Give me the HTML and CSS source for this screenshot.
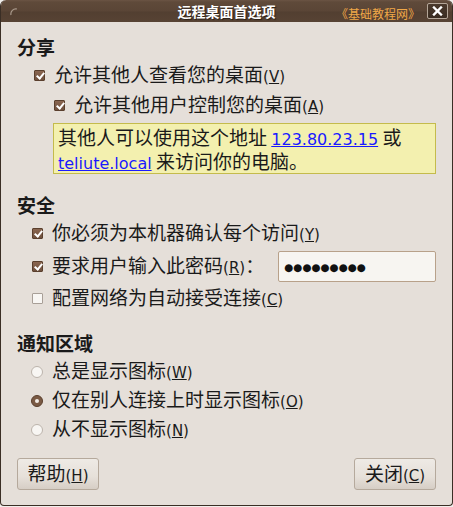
FILE: index.html
```html
<!DOCTYPE html>
<html lang="zh-CN">
<head>
<meta charset="utf-8">
<title>远程桌面首选项</title>
<link rel="stylesheet" href="styles.css">
</head>
<body>
<div class="window">
  <div class="titlebar">
    <div class="tb-left">
      <svg class="spinner" width="8" height="8" viewBox="0 0 8 8"><path d="M1 7 A5 5 0 0 1 7 1" fill="none" stroke="#a8988a" stroke-width="1.2"/></svg>
    </div>
    <div class="title">远程桌面首选项</div>
    <div class="tb-right">
      <span class="watermark">《基础教程网》</span>
      <span class="close"><svg width="11" height="10" viewBox="0 0 11 10"><path d="M2 1.5 L9 8.5 M9 1.5 L2 8.5" stroke="#fff" stroke-width="2.4" stroke-linecap="square"/></svg></span>
    </div>
  </div>

  <div class="content">
    <div class="heading h-share">分享</div>
    <div class="row row-share1">
      <span class="cb checked"></span>
      <span class="label">允许其他人查看您的桌面<span class="l">(<u>V</u>)</span></span>
    </div>
    <div class="row row-share2">
      <span class="cb checked"></span>
      <span class="label">允许其他用户控制您的桌面<span class="l">(<u>A</u>)</span></span>
    </div>
    <div class="note">
      <div class="note-line">其他人可以使用这个地址 <a class="l link" href="#">123.80.23.15</a> 或</div>
      <div class="note-line"><a class="l link" href="#">teliute.local</a> 来访问你的电脑。</div>
    </div>

    <div class="heading h-sec">安全</div>
    <div class="row row-sec1">
      <span class="cb checked"></span>
      <span class="label">你必须为本机器确认每个访问<span class="l">(<u>Y</u>)</span></span>
    </div>
    <div class="row row-sec2">
      <span class="cb checked"></span>
      <span class="label">要求用户输入此密码<span class="l">(<u>R</u>)</span>：</span>
      <span class="entry"><span class="dots">●●●●●●●●●</span></span>
    </div>
    <div class="row row-sec3">
      <span class="cb"></span>
      <span class="label">配置网络为自动接受连接<span class="l">(<u>C</u>)</span></span>
    </div>

    <div class="heading h-notif">通知区域</div>
    <div class="row row-radio">
      <span class="radio"></span>
      <span class="label">总是显示图标<span class="l">(<u>W</u>)</span></span>
    </div>
    <div class="row row-radio">
      <span class="radio checked"></span>
      <span class="label">仅在别人连接上时显示图标<span class="l">(<u>O</u>)</span></span>
    </div>
    <div class="row row-radio">
      <span class="radio"></span>
      <span class="label">从不显示图标<span class="l">(<u>N</u>)</span></span>
    </div>

    <div class="footer">
      <button class="btn">帮助<span class="l">(<u>H</u>)</span></button>
      <button class="btn">关闭<span class="l">(<u>C</u>)</span></button>
    </div>
  </div>
</div>
</body>
</html>
```
FILE: styles.css
```css
html, body {
  margin: 0;
  padding: 0;
  background: #f2efec;
}
body {
  width: 453px;
  height: 507px;
  overflow: hidden;
  font-family: "Noto Sans CJK SC", "DejaVu Sans", sans-serif;
  font-size: 19px;
  color: #1a1a1a;
}
.window {
  width: 453px;
  height: 506px;
  box-sizing: border-box;
  background: #e5dfd9;
  border: 1px solid #3a2e25;
  border-top: none;
  border-radius: 6px 6px 4px 4px;
  display: flex;
  flex-direction: column;
  overflow: hidden;
}
.titlebar {
  height: 22px;
  flex: none;
  margin: 0 -1px;
  background: linear-gradient(#6b5444 0px, #5f4a3a 2px, #5a4536 11px, #523f31 12px, #574334 22px);
  border-radius: 6px 6px 0 0;
  display: grid;
  grid-template-columns: 1fr auto 1fr;
  align-items: center;
}
.tb-left {
  padding-left: 10px;
  display: flex;
  align-items: center;
}
.spinner { margin-top: 1px; }
.title {
  font-size: 14px;
  font-weight: bold;
  color: #ffffff;
  line-height: 22px;
  text-shadow: 1px 1px 1px #2a1f17;
}
.tb-right {
  display: flex;
  justify-content: flex-end;
  align-items: center;
  gap: 7px;
  padding-right: 5px;
}
.watermark {
  font-size: 12px;
  color: #f0a848;
  line-height: 16px;
  margin-top: 6px;
}
.close {
  width: 19px;
  height: 14px;
  border: 1px solid #b4a698;
  border-radius: 2px;
  background: linear-gradient(#4a392c, #3a2c21);
  display: flex;
  align-items: center;
  justify-content: center;
}
.content {
  flex: 1;
  display: flex;
  flex-direction: column;
  padding: 0 16px 15px 16px;
}
.l {
  font-family: "DejaVu Sans", sans-serif;
  font-size: 15px;
}
.heading {
  font-weight: bold;
  font-size: 19px;
  line-height: 24px;
}
.h-share { margin-top: 13px; }
.h-sec { margin-top: 19px; }
.h-notif { margin-top: 19px; }
.row {
  display: flex;
  align-items: center;
  line-height: 24px;
}
.row-share1 { height: 30px; margin-top: 1px; padding-left: 17px; gap: 9px; }
.row-share2 { height: 30px; padding-left: 37px; gap: 9px; }
.row-sec1 { height: 32px; padding-left: 15px; gap: 9px; }
.row-sec2 { height: 35px; padding-left: 15px; gap: 9px; }
.row-sec3 { height: 28px; padding-left: 15px; gap: 9px; }
.row-radio { height: 29px; padding-left: 14px; gap: 9px; }
.h-notif + .row-radio { margin-top: 2px; }

.cb {
  width: 11px;
  height: 11px;
  box-sizing: border-box;
  border: 1px solid #a89f97;
  border-radius: 1px;
  background: #f8f6f3;
  flex: none;
  position: relative;
}
.cb.checked {
  border-color: #5a3f2d;
  background: linear-gradient(#8a6650, #6f513e);
}
.cb.checked::after {
  content: "";
  position: absolute;
  left: 3px;
  top: 0px;
  width: 3px;
  height: 6px;
  border: solid #fff;
  border-width: 0 2px 2px 0;
  transform: rotate(40deg);
}
.radio {
  width: 12px;
  height: 12px;
  box-sizing: border-box;
  border-radius: 50%;
  border: 1px solid #bcb4ac;
  background: #f8f6f3;
  flex: none;
  position: relative;
}
.radio.checked {
  border-color: #5a3f2d;
  background: #7a5a44;
}
.radio.checked::after {
  content: "";
  position: absolute;
  left: 3px;
  top: 3px;
  width: 4px;
  height: 4px;
  border-radius: 50%;
  background: #f4eee8;
}
.note {
  margin: 3px 0 0 36px;
  border: 1px solid #c4bb4c;
  background: #f3f0af;
  padding: 1px 4px 0 4px;
}
.note-line {
  line-height: 24px;
  height: 24px;
  white-space: nowrap;
}
.link {
  color: #1a1aff;
  text-decoration: underline;
  font-size: 16px;
}
.entry {
  margin-left: auto;
  width: 158px;
  height: 31px;
  box-sizing: border-box;
  border: 1px solid #b8a18a;
  border-radius: 2px;
  background: #f7f5f1;
  display: flex;
  align-items: center;
  padding-left: 5px;
}
.dots {
  font-family: "DejaVu Sans", sans-serif;
  font-size: 10.4px;
  color: #111;
  line-height: 12px;
}
.footer {
  margin-top: auto;
  display: flex;
  justify-content: space-between;
}
.btn {
  width: 82px;
  height: 32px;
  box-sizing: border-box;
  border: 1px solid #b5a99c;
  border-radius: 3px;
  background: linear-gradient(#eeeae5 0%, #e6e0d9 60%, #d6cec5 100%);
  font-family: "Noto Sans CJK SC", "DejaVu Sans", sans-serif;
  font-size: 19px;
  color: #1a1a1a;
  padding: 0;
  line-height: 24px;
}
```
